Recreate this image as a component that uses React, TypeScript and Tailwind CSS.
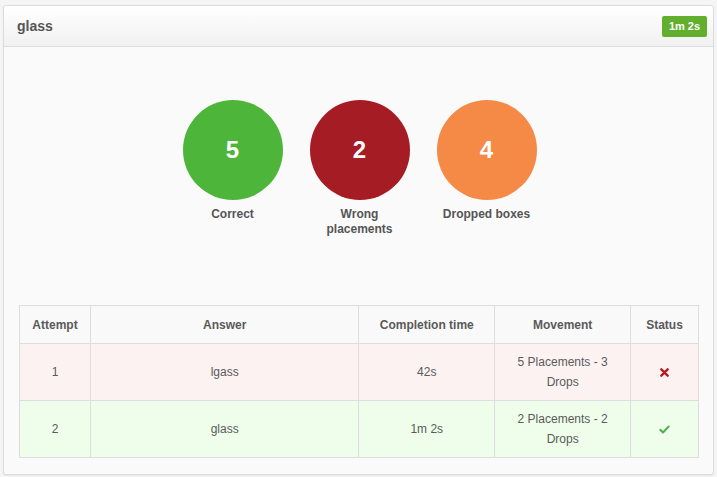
import React from 'react';

const stats = [
  { value: 5, label: 'Correct', color: 'bg-[#4db63a]' },
  { value: 2, label: 'Wrong placements', color: 'bg-[#a61c25]' },
  { value: 4, label: 'Dropped boxes', color: 'bg-[#f48a45]' },
];

const attempts = [
  { id: 1, answer: 'lgass', time: '42s', movement: '5 Placements - 3 Drops', ok: false },
  { id: 2, answer: 'glass', time: '1m 2s', movement: '2 Placements - 2 Drops', ok: true },
];

function Cross() {
  return (
    <svg width="9" height="9" viewBox="0 0 10 10" className="inline-block">
      <path d="M1.5 1.5 L8.5 8.5 M8.5 1.5 L1.5 8.5" stroke="#b3191f" strokeWidth="2.6" strokeLinecap="round" />
    </svg>
  );
}

function Check() {
  return (
    <svg width="11" height="9" viewBox="0 0 12 10" className="inline-block">
      <path d="M1.5 5.5 L4.5 8.2 L10.5 1.8" stroke="#4cae4c" strokeWidth="2.4" fill="none" strokeLinecap="round" strokeLinejoin="round" />
    </svg>
  );
}

export default function App() {
  return (
    <div className="w-[717px] h-[477px] bg-[#f5f5f5] pt-[5px] px-[3px] font-['Liberation_Sans',Arial,sans-serif] text-[#555]">
      <div className="h-[470px] bg-[#fafafa] border border-[#dcdcdc] rounded-[3px] shadow-[0_1px_2px_rgba(0,0,0,0.06)] flex flex-col">
        {/* Header */}
        <div className="h-[41px] flex items-center justify-between pl-[13px] pr-[6px] border-b border-[#dedede] bg-gradient-to-b from-white to-[#f1f1f1] rounded-t-[3px]">
          <h2 className="text-[14px] font-bold text-[#555]">glass</h2>
          <span className="h-[21px] w-[45px] flex items-center justify-center bg-[#62ae2d] text-white text-[11px] font-bold rounded-[2px]">
            1m 2s
          </span>
        </div>

        {/* Body */}
        <div className="flex-1 px-[15px] pt-[53px]">
          <div className="flex justify-center gap-[27px] ml-[2px]">
            {stats.map((s) => (
              <div key={s.label} className="w-[100px] flex flex-col items-center">
                <div className={`w-[100px] h-[100px] rounded-full ${s.color} flex items-center justify-center text-white text-[24px] font-bold`}>
                  {s.value}
                </div>
                <div className="mt-[7px] text-[12px] font-bold text-center leading-[15px]">{s.label}</div>
              </div>
            ))}
          </div>

          <table className="mt-[68px] w-[680px] border-collapse text-[12px] text-center leading-[20px] text-[#5a5a5a]">
            <thead>
              <tr className="bg-[#f9f9f9]">
                <th className="w-[71px] h-[38px] border border-[#dddddd] font-bold">Attempt</th>
                <th className="w-[269px] border border-[#dddddd] font-bold">Answer</th>
                <th className="w-[136px] border border-[#dddddd] font-bold">Completion time</th>
                <th className="w-[136px] border border-[#dddddd] font-bold">Movement</th>
                <th className="w-[68px] border border-[#dddddd] font-bold">Status</th>
              </tr>
            </thead>
            <tbody>
              {attempts.map((a) => (
                <tr key={a.id} className={a.ok ? 'bg-[#eefeea]' : 'bg-[#fdf2f2]'}>
                  <td className="h-[57px] border border-[#dddddd]">{a.id}</td>
                  <td className="border border-[#dddddd]">{a.answer}</td>
                  <td className="border border-[#dddddd]">{a.time}</td>
                  <td className="border border-[#dddddd] px-[8px]">{a.movement}</td>
                  <td className="border border-[#dddddd]">{a.ok ? <Check /> : <Cross />}</td>
                </tr>
              ))}
            </tbody>
          </table>
        </div>
      </div>
    </div>
  );
}
